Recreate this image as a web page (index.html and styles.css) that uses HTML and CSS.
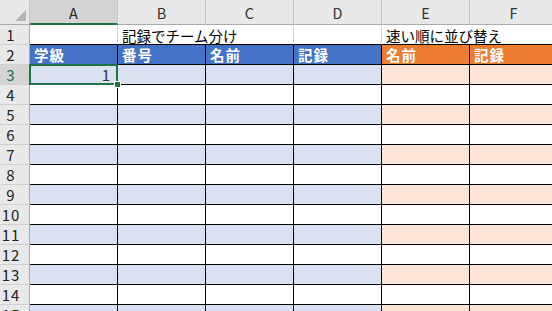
FILE: index.html
```html
<!DOCTYPE html>
<html lang="ja">
<head>
    <meta charset="UTF-8">
    <title>記録でチーム分け</title>
    <link rel="stylesheet" href="styles.css">
</head>
<body>
    <div class="sheet">
        <!-- 列見出し -->
        <div class="corner"><span class="tri"></span></div>
        <div class="ch sel">A</div>
        <div class="ch">B</div>
        <div class="ch">C</div>
        <div class="ch">D</div>
        <div class="ch">E</div>
        <div class="ch">F</div>

        <!-- 1行目: タイトル -->
        <div class="rh">1</div>
        <div class="c top"></div>
        <div class="c top title span2">記録でチーム分け</div>
        <div class="c top"></div>
        <div class="c top title span2">速い順に並び替え</div>

        <!-- 2行目: 表の見出し -->
        <div class="rh">2</div>
        <div class="c hb">学級</div>
        <div class="c hb">番号</div>
        <div class="c hb">名前</div>
        <div class="c hb">記録</div>
        <div class="c ho">名前</div>
        <div class="c ho">記録</div>

        <!-- データ行 -->
        <div class="rh sel">3</div>
        <div class="c b active"><span class="val">1</span></div><div class="c b"></div><div class="c b"></div><div class="c b"></div><div class="c o"></div><div class="c o"></div>
        <div class="rh">4</div>
        <div class="c"></div><div class="c"></div><div class="c"></div><div class="c"></div><div class="c"></div><div class="c"></div>
        <div class="rh">5</div>
        <div class="c b"></div><div class="c b"></div><div class="c b"></div><div class="c b"></div><div class="c o"></div><div class="c o"></div>
        <div class="rh">6</div>
        <div class="c"></div><div class="c"></div><div class="c"></div><div class="c"></div><div class="c"></div><div class="c"></div>
        <div class="rh">7</div>
        <div class="c b"></div><div class="c b"></div><div class="c b"></div><div class="c b"></div><div class="c o"></div><div class="c o"></div>
        <div class="rh">8</div>
        <div class="c"></div><div class="c"></div><div class="c"></div><div class="c"></div><div class="c"></div><div class="c"></div>
        <div class="rh">9</div>
        <div class="c b"></div><div class="c b"></div><div class="c b"></div><div class="c b"></div><div class="c o"></div><div class="c o"></div>
        <div class="rh">10</div>
        <div class="c"></div><div class="c"></div><div class="c"></div><div class="c"></div><div class="c"></div><div class="c"></div>
        <div class="rh">11</div>
        <div class="c b"></div><div class="c b"></div><div class="c b"></div><div class="c b"></div><div class="c o"></div><div class="c o"></div>
        <div class="rh">12</div>
        <div class="c"></div><div class="c"></div><div class="c"></div><div class="c"></div><div class="c"></div><div class="c"></div>
        <div class="rh">13</div>
        <div class="c b"></div><div class="c b"></div><div class="c b"></div><div class="c b"></div><div class="c o"></div><div class="c o"></div>
        <div class="rh">14</div>
        <div class="c"></div><div class="c"></div><div class="c"></div><div class="c"></div><div class="c"></div><div class="c"></div>
        <div class="rh">15</div>
        <div class="c b"></div><div class="c b"></div><div class="c b"></div><div class="c b"></div><div class="c o"></div><div class="c o"></div>
    </div>
</body>
</html>
```

FILE: styles.css
```css
/* シート全体 */
body {
    margin: 0;
    padding: 0;
    background-color: #fff;
    overflow: hidden;
    font-family: "Noto Sans CJK JP", "Noto Sans", sans-serif;
}

.sheet {
    display: grid;
    grid-template-columns: 30px repeat(6, 88px);
    grid-template-rows: 25px repeat(15, 20px);
    width: 558px;
}

.sheet > div {
    box-sizing: border-box;
}

/* 左上の角 */
.corner {
    background-color: #e9e9e9;
    border-right: 1px solid #c6c6c6;
    border-bottom: 1px solid #ababab;
    display: flex;
    justify-content: flex-end;
    align-items: flex-end;
    padding: 0 3px 3px 0;
}

.tri {
    width: 0;
    height: 0;
    border-left: 11px solid transparent;
    border-bottom: 11px solid #b5b5b5;
}

/* 列見出し */
.ch {
    background-color: #e9e9e9;
    color: #333;
    font-size: 14.5px;
    display: flex;
    justify-content: center;
    align-items: center;
    border-right: 1px solid #c6c6c6;
    border-bottom: 1px solid #ababab;
    padding-top: 1px;
}

.ch.sel {
    background-color: #d4d4d4;
    color: #262626;
    border-bottom: 2px solid #217346;
}

/* 行見出し */
.rh {
    background-color: #e9e9e9;
    color: #222;
    font-size: 15px;
    letter-spacing: 1px;
    display: flex;
    justify-content: center;
    align-items: center;
    padding-right: 7px;
    border-right: 1px solid #ababab;
    border-bottom: 1px solid #d0d0d0;
}

.rh.sel {
    background-color: #d4d4d4;
    color: #217346;
}

/* セル */
.c {
    border-right: 1px solid #000;
    border-bottom: 1px solid #000;
    font-size: 14.5px;
    display: flex;
    align-items: center;
    padding-left: 4px;
    white-space: nowrap;
}

.c.top {
    border-right: 1px solid #d4d4d4;
}

.span2 {
    grid-column: span 2;
}

.title {
    color: #000;
    padding-top: 1px;
}

.hb,
.ho {
    color: #fff;
    font-weight: bold;
    letter-spacing: 1px;
}

.hb {
    background-color: #4472c4;
}

.ho {
    background-color: #ed7d31;
}

.b {
    background-color: #d9e1f2;
}

.o {
    background-color: #fce4d6;
}

/* 選択中のセル */
.active {
    position: relative;
    justify-content: flex-end;
    padding-right: 7px;
}

.active .val {
    color: #333;
    font-size: 15px;
}

.active::before {
    content: "";
    position: absolute;
    left: -1px;
    top: -1px;
    right: -1px;
    bottom: -1px;
    border: 2px solid #217346;
}

.active::after {
    content: "";
    position: absolute;
    right: -4px;
    bottom: -4px;
    width: 5px;
    height: 5px;
    background-color: #217346;
    border: 1px solid #fff;
}
```
